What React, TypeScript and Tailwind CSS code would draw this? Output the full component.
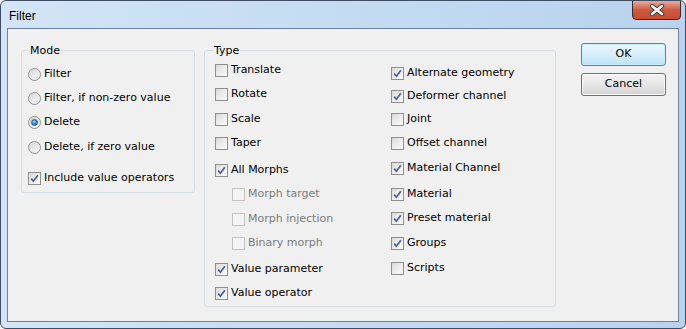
import clsx from 'clsx'

const font = { fontFamily: '"DejaVu Sans", Tahoma, sans-serif' }

function Check({ checked, disabled }: { checked?: boolean; disabled?: boolean }) {
  return (
    <span
      className={clsx(
        'w-[13px] h-[13px] shrink-0 border flex items-center justify-center',
        disabled ? 'border-[#c3c3c3] bg-[#f6f6f6]' : 'border-[#8e8f8f] bg-white'
      )}
    >
      <span
        className={clsx(
          'w-[11px] h-[11px] flex items-center justify-center',
          disabled ? 'bg-[#f4f4f4]' : 'bg-gradient-to-br from-[#dadada] via-[#ececec] to-[#fbfbfb]'
        )}
      >
        {checked && (
          <svg width="9" height="9" viewBox="0 0 9 9">
            <path d="M1.2 4.6 L3.4 7.2 L7.9 1.2" fill="none" stroke="#4a5f97" strokeWidth="1.7" />
          </svg>
        )}
      </span>
    </span>
  )
}

function Radio({ checked }: { checked?: boolean }) {
  return (
    <span className="w-[13px] h-[13px] shrink-0 rounded-full border border-[#8e8f8f] bg-gradient-to-br from-[#d6d6d6] to-[#fbfbfb] flex items-center justify-center">
      {checked && (
        <span className="w-[7px] h-[7px] rounded-full bg-[radial-gradient(circle_at_40%_35%,#b6e3ff_0%,#2c8ddb_45%,#0b4f9c_100%)] border border-[#2b5f8e]" />
      )}
    </span>
  )
}

function Row({
  label,
  checked,
  disabled,
  radio,
  className,
}: {
  label: string
  checked?: boolean
  disabled?: boolean
  radio?: boolean
  className?: string
}) {
  return (
    <div className={clsx('flex items-center gap-[3px] h-[24px] text-[11px]', className)}>
      {radio ? <Radio checked={checked} /> : <Check checked={checked} disabled={disabled} />}
      <span className={clsx('whitespace-nowrap', disabled ? 'text-[#7b7b7b]' : 'text-black')}>{label}</span>
    </div>
  )
}

export default function App() {
  return (
    <div
      className="w-[686px] h-[329px] flex flex-col rounded-[6px] border border-[#3e4d61] bg-gradient-to-r from-[#d3e5f6] via-[#c4dbf2] to-[#b9d3ee] overflow-hidden"
      style={font}
    >
      {/* title bar */}
      <div className="h-[27px] flex justify-between shrink-0">
        <span
          className="pl-[8px] pt-[8px] text-[12px] leading-[14px] text-black"
          style={{ fontFamily: '"Liberation Sans", Arial, sans-serif' }}
        >
          Filter
        </span>
        <div className="-mt-[1px] mr-[4px] w-[49px] h-[20px] rounded-b-[4px] border border-[#3b2a2a] bg-gradient-to-b from-[#e9a899] via-[#cf5a42] to-[#c9492f] flex items-center justify-center">
          <svg width="16" height="12" viewBox="0 0 16 12">
            <path d="M3 2 L13 10 M13 2 L3 10" stroke="#3f3f3f" strokeWidth="4.2" strokeLinecap="round" />
            <path d="M3 2 L13 10 M13 2 L3 10" stroke="#ffffff" strokeWidth="2.4" strokeLinecap="round" />
          </svg>
        </div>
      </div>

      {/* client area */}
      <div className="flex-1 mx-[6px] mb-[6px] border border-[#6c809a] bg-[#f0f0f0] flex items-start pl-[13px] pt-[15px]">
        <fieldset className="w-[174px] h-[149px] border border-[#d5dfe5] rounded-[3px] pl-[6px]">
          <legend className="px-[1px] ml-[1px] text-[11px] leading-[13px] text-black">Mode</legend>
          <div className="pt-[5px] flex flex-col">
            <Row radio label="Filter" />
            <Row radio label="Filter, if non-zero value" />
            <Row radio checked label="Delete" />
            <Row radio label="Delete, if zero value" className="mt-[1px]" />
            <Row checked label="Include value operators" className="mt-[7px]" />
          </div>
        </fieldset>

        <fieldset className="ml-[9px] w-[352px] h-[263px] border border-[#d5dfe5] rounded-[3px] pl-[10px]">
          <legend className="px-[1px] -ml-[2px] text-[11px] leading-[13px] text-black">Type</legend>
          <div className="flex pt-[1px]">
            <div className="w-[176px] flex flex-col">
              <Row label="Translate" />
              <Row label="Rotate" />
              <Row label="Scale" className="mt-[1px]" />
              <Row label="Taper" />
              <Row checked label="All Morphs" className="mt-[3px]" />
              <div className="pl-[17px] flex flex-col">
                <Row disabled label="Morph target" />
                <Row disabled label="Morph injection" className="mt-[1px]" />
                <Row disabled label="Binary morph" />
              </div>
              <Row checked label="Value parameter" className="mt-[2px]" />
              <Row checked label="Value operator" />
            </div>
            <div className="flex flex-col pt-[3px]">
              <Row checked label="Alternate geometry" />
              <Row checked label="Deformer channel" className="-mt-[1px]" />
              <Row label="Joint" className="-mt-[1px]" />
              <Row label="Offset channel" />
              <Row checked label="Material Channel" className="mt-[1px]" />
              <Row checked label="Material" className="mt-[2px]" />
              <Row checked label="Preset material" />
              <Row checked label="Groups" className="mt-[1px]" />
              <Row label="Scripts" className="mt-[1px]" />
            </div>
          </div>
        </fieldset>

        <div className="ml-[25px] -mt-[1px] flex flex-col gap-[7px]">
          <button className="w-[85px] h-[23px] rounded-[3px] border border-[#3c8fc6] bg-gradient-to-b from-[#eaf6fd] via-[#d7eefb] to-[#bde2f7] shadow-[inset_0_0_0_1px_#c8ecfc] text-[11px] text-black">
            OK
          </button>
          <button className="w-[85px] h-[23px] rounded-[3px] border border-[#707070] bg-gradient-to-b from-[#f3f3f3] via-[#e6e6e6] to-[#d2d2d2] shadow-[inset_0_0_0_1px_#fbfbfb] text-[11px] text-black">
            Cancel
          </button>
        </div>
      </div>
    </div>
  )
}
